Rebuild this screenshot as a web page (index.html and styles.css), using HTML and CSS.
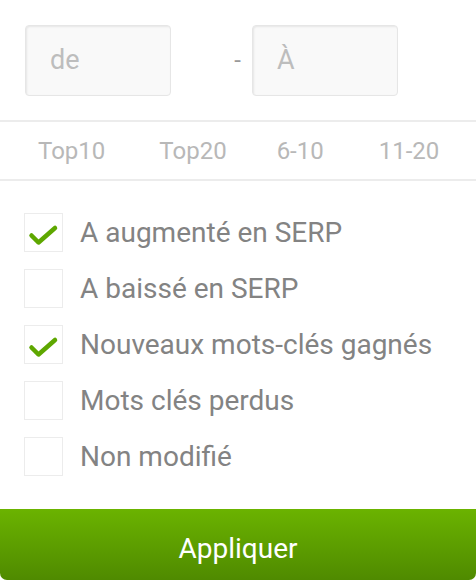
FILE: index.html
```html
<!DOCTYPE html>
<html lang="fr">
<head>
<meta charset="utf-8">
<link rel="stylesheet" href="styles.css">
</head>
<body>
<div class="panel">
  <div class="range">
    <div class="field">de</div>
    <span class="dash">-</span>
    <div class="field">À</div>
  </div>
  <div class="tabs">
    <span class="tab t1">Top10</span>
    <span class="tab t2">Top20</span>
    <span class="tab t3">6-10</span>
    <span class="tab t4">11-20</span>
  </div>
  <div class="options">
    <div class="opt"><span class="box"><svg viewBox="0 0 39 39" width="39" height="39"><path d="M7.5 22.5 L14.5 29.5 L31 15" fill="none" stroke="#5ea700" stroke-width="4.5" stroke-linecap="round" stroke-linejoin="round"/></svg></span><span class="label">A augmenté en SERP</span></div>
    <div class="opt"><span class="box"></span><span class="label">A baissé en SERP</span></div>
    <div class="opt"><span class="box"><svg viewBox="0 0 39 39" width="39" height="39"><path d="M7.5 22.5 L14.5 29.5 L31 15" fill="none" stroke="#5ea700" stroke-width="4.5" stroke-linecap="round" stroke-linejoin="round"/></svg></span><span class="label">Nouveaux mots-clés gagnés</span></div>
    <div class="opt"><span class="box"></span><span class="label">Mots clés perdus</span></div>
    <div class="opt"><span class="box"></span><span class="label">Non modifié</span></div>
  </div>
  <div class="apply">Appliquer</div>
</div>
</body>
</html>
```
FILE: styles.css
```css
html, body {
  margin: 0;
  padding: 0;
  background: #ffffff;
}
body {
  font-family: Roboto, "Liberation Sans", sans-serif;
  width: 476px;
  height: 580px;
  overflow: hidden;
}
.panel {
  display: flex;
  flex-direction: column;
  height: 580px;
}
.range {
  display: flex;
  align-items: flex-start;
  padding: 25px 24px 0 25px;
  height: 122px;
  box-sizing: border-box;
  border-bottom: 2px solid #ececec;
}
.field {
  width: 146px;
  height: 71px;
  box-sizing: border-box;
  background: #f9f9f9;
  border: 1px solid #e6e6e6;
  border-radius: 4px;
  box-shadow: inset 1px 1px 2px rgba(0,0,0,0.08);
  color: #bdbdbd;
  font-size: 27px;
  line-height: 69px;
  padding-left: 24px;
}
.dash {
  width: 81px;
  height: 71px;
  line-height: 71px;
  text-align: right;
  padding-right: 11px;
  box-sizing: border-box;
  color: #9a9a9a;
  font-size: 24px;
}
.tabs {
  height: 59px;
  box-sizing: border-box;
  display: flex;
  align-items: center;
  border-bottom: 2px solid #ececec;
  color: #b8b8b8;
  font-size: 24px;
}
.tab { display: block; }
.t1 { margin-left: 38px; }
.t2 { margin-left: 54px; }
.t3 { margin-left: 50px; }
.t4 { margin-left: 55px; }
.options {
  flex: 1;
  display: flex;
  flex-direction: column;
  gap: 17px;
  padding: 32px 0 0 24px;
}
.opt {
  display: flex;
  align-items: center;
  height: 39px;
}
.box {
  width: 39px;
  height: 39px;
  box-sizing: border-box;
  border: 1px solid #ececec;
  display: block;
  position: relative;
}
.box svg {
  position: absolute;
  left: -1px;
  top: -1px;
}
.label {
  margin-left: 17px;
  color: #838383;
  font-size: 28px;
  line-height: 39px;
}
.apply {
  height: 71px;
  box-sizing: border-box;
  padding-top: 9px;
  background: linear-gradient(#6bb300, #4f8a00);
  border-radius: 0 0 7px 7px;
  color: #ffffff;
  font-size: 28px;
  text-align: center;
  line-height: 62px;
}
```
